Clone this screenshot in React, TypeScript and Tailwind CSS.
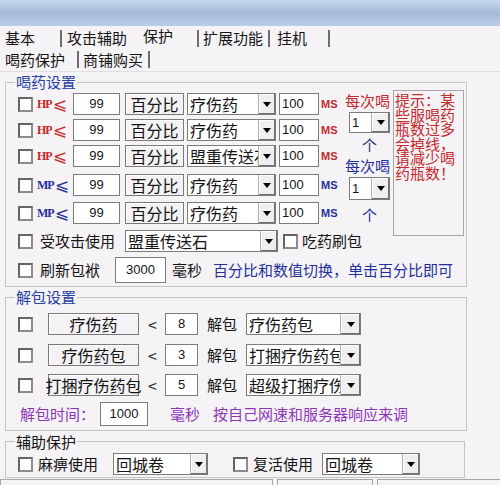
import React from 'react';

const RED = 'text-[#c42a2e]';
const BLUE = 'text-[#1f2f9c]';
const PURPLE = 'text-[#8c36b6]';

function Check({ className = '' }: { className?: string }) {
  return (
    <span
      className={`block w-[15px] h-[15px] shrink-0 bg-white border-2 border-[#646464] border-b-[#8c8c8c] border-r-[#8c8c8c] ${className}`}
    />
  );
}

function Arrow({ className = '' }: { className?: string }) {
  return (
    <span
      className={`flex items-center justify-center h-full shrink-0 bg-[#f1eef1] border-l border-[#b0b0b0] shadow-[inset_-1px_-1px_0_#707070,inset_1px_1px_0_#ffffff] ${className}`}
    >
      <svg width="8" height="5" viewBox="0 0 8 5">
        <path d="M0 0h8L4 5z" fill="#000" />
      </svg>
    </span>
  );
}

function Select({
  text,
  className = '',
  arrow = 'w-[17px]',
}: {
  text: string;
  className?: string;
  arrow?: string;
}) {
  return (
    <div className={`flex shrink-0 bg-white border border-[#7c7c7c] ${className}`}>
      <span className="flex-1 min-w-0 overflow-hidden whitespace-nowrap pl-[2px] text-[16px] leading-[20px]">
        {text}
      </span>
      <Arrow className={arrow} />
    </div>
  );
}

function Field({ value, className = '' }: { value: string; className?: string }) {
  return (
    <div
      className={`flex items-center shrink-0 bg-white border border-[#7c7c7c] font-['Liberation_Sans',sans-serif] text-[13px] ${className}`}
    >
      {value}
    </div>
  );
}

function Btn({ text, className = '' }: { text: string; className?: string }) {
  return (
    <div
      className={`flex items-center justify-center shrink-0 whitespace-nowrap bg-[#f5f2f5] border border-[#7a7a7a] shadow-[inset_1px_1px_0_#ffffff] text-[16px] leading-[20px] ${className}`}
    >
      {text}
    </div>
  );
}

function PotionRow({ kind, item, className = '' }: { kind: 'HP' | 'MP'; item: string; className?: string }) {
  const c = kind === 'HP' ? RED : BLUE;
  return (
    <div className={`flex items-center h-[22px] ${className}`}>
      <Check />
      <span className={`flex items-center w-[33px] ml-[4px] ${c}`}>
        <span className="font-['Liberation_Serif',serif] font-bold text-[12px] tracking-[-1px]">{kind}</span>
        <span className="font-['DejaVu_Sans',sans-serif] text-[17px] leading-[20px] ml-[1px]">⩽</span>
      </span>
      <Field value="99" className="ml-[3px] w-[47px] h-[22px] justify-center" />
      <Btn text="百分比" className="ml-[5px] w-[59px] h-[22px]" />
      <Select text={item} className="ml-[3px] w-[89px] h-[22px]" />
      <Field value="100" className="ml-[3px] w-[40px] h-[22px] pl-[2px]" />
      <span className={`ml-[2px] font-['Liberation_Sans',sans-serif] font-bold text-[11px] ${c}`}>MS</span>
    </div>
  );
}

function UnpackRow({ name, count, pack, className = '' }: { name: string; count: string; pack: string; className?: string }) {
  return (
    <div className={`flex items-center h-[22px] ${className}`}>
      <Check />
      <Btn text={name} className="ml-[15px] w-[91px] h-[22px]" />
      <span className="ml-[9px] w-[12px] text-[16px] text-[#333]">&lt;</span>
      <Field value={count} className="ml-[5px] w-[33px] h-[22px] justify-center" />
      <span className="ml-[9px] text-[15px]">解包</span>
      <Select text={pack} className="ml-[9px] w-[115px] h-[22px]" arrow="w-[20px]" />
    </div>
  );
}

function Sep({ className = '' }: { className?: string }) {
  return <span className={`block w-[2px] h-[17px] bg-[#6e6e6e] shrink-0 ${className}`} />;
}

export default function App() {
  return (
    <div className="w-[500px] h-[485px] overflow-hidden bg-[#f6f3f6] text-[#141414] font-['Noto_Sans_CJK_SC','Liberation_Sans',sans-serif]">
      {/* title bar */}
      <div className="h-[26px] bg-linear-to-b from-[#c8d8ec] via-[#a4bbd9] to-[#bacde6]" />

      {/* main tabs */}
      <div className="flex items-center h-[24px] pl-[5px] text-[15px] leading-[18px]">
        <span>基本</span>
        <Sep className="ml-[25px]" />
        <span className="ml-[5px]">攻击辅助</span>
        <span className="ml-[16px] mb-[4px]">保护</span>
        <Sep className="ml-[24px]" />
        <span className="ml-[4px]">扩展功能</span>
        <Sep className="ml-[5px]" />
        <span className="ml-[7px]">挂机</span>
        <Sep className="ml-[21px]" />
      </div>

      {/* sub tabs */}
      <div className="flex items-start h-[21px] pt-[1px] pl-[5px] text-[15px] leading-[17px]">
        <span>喝药保护</span>
        <Sep className="ml-[12px]" />
        <span className="ml-[4px]">商铺购买</span>
        <Sep className="ml-[5px]" />
      </div>
      <div className="h-[1px] bg-[#e2dee2]" />

      {/* 喝药设置 */}
      <fieldset className="ml-[5px] w-[462px] min-w-0 border border-[#c6c2c6]">
        <legend className="ml-[9px] px-[1px] text-[15px] leading-[20px] text-[#2343a5]">喝药设置</legend>
        <div className="pl-[12px] pb-[3px]">
          <div className="flex">
            <div>
              <div className="flex">
                <div className="flex flex-col w-[320px]">
                  <PotionRow kind="HP" item="疗伤药" className="mt-[1px]" />
                  <PotionRow kind="HP" item="疗伤药" className="mt-[4px]" />
                  <PotionRow kind="HP" item="盟重传送石" className="mt-[4px]" />
                  <PotionRow kind="MP" item="疗伤药" className="mt-[7px]" />
                  <PotionRow kind="MP" item="疗伤药" className="mt-[6px]" />
                </div>
                <div className="ml-[7px] w-[45px] flex flex-col text-[15px] leading-[15px]">
                  <span className={`mt-[1px] ${RED}`}>每次喝</span>
                  <div className="mt-[4px] ml-[4px] w-[41px] h-[21px] flex bg-white border border-[#7c7c7c]">
                    <span className="flex-1 pl-[2px] font-['Liberation_Sans',sans-serif] text-[13px] leading-[19px]">1</span>
                    <Arrow className="w-[18px]" />
                  </div>
                  <span className="mt-[4px] text-center pl-[4px] text-[#2a3470]">个</span>
                  <span className={`mt-[6px] ${BLUE}`}>每次喝</span>
                  <div className="mt-[4px] ml-[4px] w-[41px] h-[23px] flex bg-white border border-[#7c7c7c]">
                    <span className="flex-1 pl-[2px] font-['Liberation_Sans',sans-serif] text-[13px] leading-[21px]">1</span>
                    <Arrow className="w-[18px]" />
                  </div>
                  <span className={`mt-[7px] text-center pl-[4px] ${BLUE}`}>个</span>
                </div>
              </div>

              <div className="flex items-center h-[22px] mt-[6px]">
                <Check />
                <span className="ml-[7px] text-[15px] whitespace-nowrap">受攻击使用</span>
                <Select text="盟重传送石" className="ml-[10px] w-[153px] h-[22px]" />
                <Check className="ml-[5px]" />
                <span className="ml-[4px] text-[15px] whitespace-nowrap">吃药刷包</span>
              </div>
            </div>

            <div className={`ml-[3px] -mt-[2px] w-[71px] h-[146px] shrink-0 border border-[#a9a5a9] pt-[2px] pl-[1px] text-[15px] leading-[14.6px] ${RED}`}>
              <div>提示：某</div>
              <div>些服喝药</div>
              <div>瓶数过多</div>
              <div>会掉线，</div>
              <div>请减少喝</div>
              <div>药瓶数！</div>
            </div>
          </div>

          <div className="flex items-center h-[26px] mt-[5px]">
            <Check />
            <span className="ml-[7px] text-[15px] whitespace-nowrap">刷新包袱</span>
            <Field value="3000" className="ml-[15px] w-[51px] h-[26px] justify-center" />
            <span className="ml-[6px] text-[15px]">毫秒</span>
            <span className={`ml-[11px] text-[15px] whitespace-nowrap ${BLUE}`}>百分比和数值切换，单击百分比即可</span>
          </div>
        </div>
      </fieldset>

      {/* 解包设置 */}
      <fieldset className="mt-[2px] ml-[5px] w-[462px] min-w-0 border border-[#c6c2c6]">
        <legend className="ml-[9px] px-[1px] text-[15px] leading-[16px] text-[#2343a5]">解包设置</legend>
        <div className="pl-[12px] pb-[4px]">
          <UnpackRow name="疗伤药" count="8" pack="疗伤药包" className="mt-[8px]" />
          <UnpackRow name="疗伤药包" count="3" pack="打捆疗伤药包" className="mt-[9px]" />
          <UnpackRow name="打捆疗伤药包" count="5" pack="超级打捆疗伤药包" className="mt-[8px]" />
          <div className="flex items-center h-[24px] mt-[6px]">
            <span className={`ml-[2px] text-[15px] whitespace-nowrap ${PURPLE}`}>解包时间：</span>
            <Field value="1000" className="ml-[5px] w-[48px] h-[24px] justify-center" />
            <span className={`ml-[22px] text-[15px] ${PURPLE}`}>毫秒</span>
            <span className={`ml-[13px] text-[15px] whitespace-nowrap ${PURPLE}`}>按自己网速和服务器响应来调</span>
          </div>
        </div>
      </fieldset>

      {/* 辅助保护 */}
      <fieldset className="mt-[3px] ml-[5px] w-[460px] min-w-0 border border-[#c6c2c6]">
        <legend className="ml-[9px] px-[1px] text-[15px] leading-[15px]">辅助保护</legend>
        <div className="pl-[12px] pb-[2px]">
          <div className="flex items-center h-[22px] mt-[4px]">
            <Check />
            <span className="ml-[5px] text-[15px] whitespace-nowrap">麻痹使用</span>
            <Select text="回城卷" className="ml-[15px] w-[95px] h-[22px]" />
            <Check className="ml-[25px]" />
            <span className="ml-[5px] text-[15px] whitespace-nowrap">复活使用</span>
            <Select text="回城卷" className="ml-[9px] w-[98px] h-[22px]" />
          </div>
        </div>
      </fieldset>

      {/* status strip */}
      <div className="flex h-[8px] mt-[1px]">
        <div className="w-[273px] border-t border-l border-r border-[#a8a4a8]" />
        <div className="ml-[4px] w-[96px] border-t border-l border-r border-[#a8a4a8]" />
        <div className="ml-[4px] flex-1 border-t border-l border-[#a8a4a8]" />
      </div>
    </div>
  );
}
